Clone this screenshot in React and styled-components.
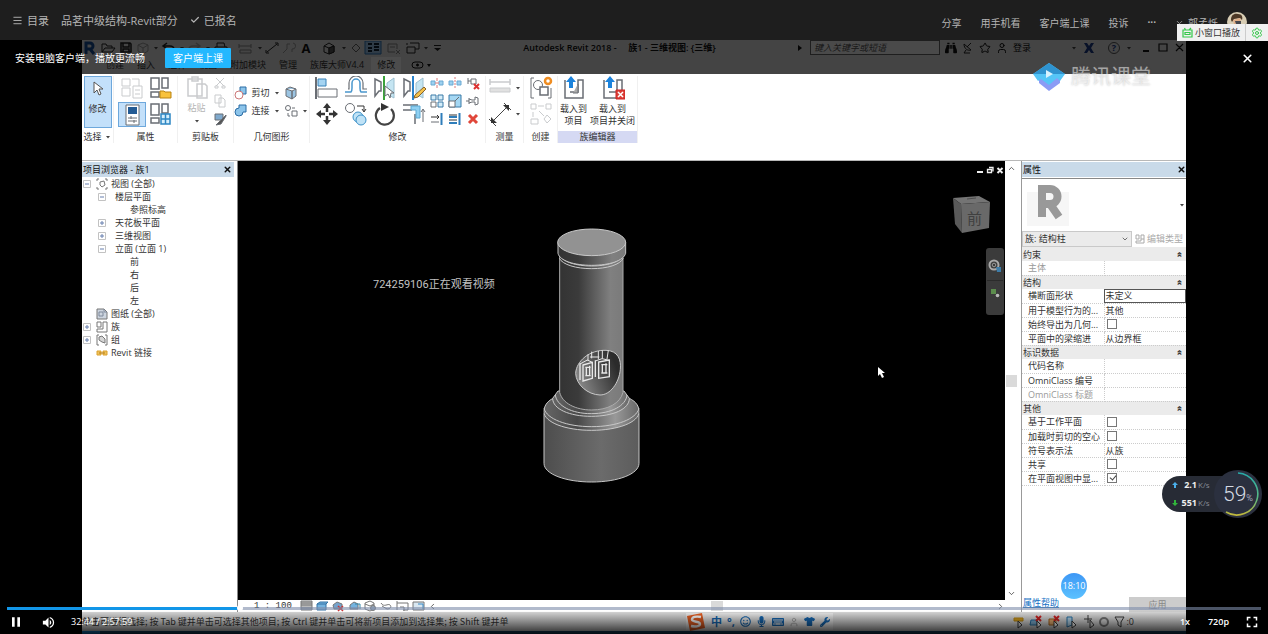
import React, { useState } from "react";
import styled, { createGlobalStyle, css } from "styled-components";
import {
    FaBinoculars, FaKeyboard, FaMicrophone, FaRegSmile, FaTshirt, FaWrench,
} from "react-icons/fa";
import { MdFullscreen, MdPause, MdVolumeUp } from "react-icons/md";
import {
    Check, ChevronDown, ChevronLeft, ChevronRight, ChevronUp, Menu, Settings, Star, User, X,
} from "lucide-react";

const treeItems = [
    { depth: 0, sign: "-", icon: "view", text: "视图 (全部)" },
    { depth: 1, sign: "-", text: "楼层平面" },
    { depth: 2, text: "参照标高" },
    { depth: 1, sign: "+", text: "天花板平面" },
    { depth: 1, sign: "+", text: "三维视图" },
    { depth: 1, sign: "-", text: "立面 (立面 1)" },
    { depth: 2, text: "前" },
    { depth: 2, text: "右" },
    { depth: 2, text: "后" },
    { depth: 2, text: "左" },
    { depth: 0, icon: "sheet", text: "图纸 (全部)" },
    { depth: 0, sign: "+", icon: "family", text: "族" },
    { depth: 0, sign: "+", icon: "group", text: "组" },
    { depth: 0, icon: "link", text: "Revit 链接" },
];

const propertyGroups = [
    { title: "约束", rows: [{ name: "主体", muted: true }] },
    {
        title: "结构",
        rows: [
            { name: "横断面形状", value: "未定义", active: true },
            { name: "用于模型行为的...", value: "其他" },
            { name: "始终导出为几何...", check: true },
            { name: "平面中的梁缩进", value: "从边界框" },
        ],
    },
    {
        title: "标识数据",
        rows: [{ name: "代码名称" }, { name: "OmniClass 编号" }, { name: "OmniClass 标题", muted: true }],
    },
    {
        title: "其他",
        rows: [
            { name: "基于工作平面", check: true },
            { name: "加载时剪切的空心", check: true },
            { name: "符号表示法", value: "从族" },
            { name: "共享", check: true },
            { name: "在平面视图中显...", check: true, checked: true },
        ],
    },
];

const tabs = ["创建", "插入", "注释", "视图", "附加模块", "管理", "族库大师V4.4"];

export default function App() {
    const [position, setPosition] = useState(18.39);

    return (
        <Page>
            <Global />
            <TopBar>
                <TopLeft>
                    <TopButton type="button"><Menu size={11} strokeWidth={2} />目录</TopButton>
                    <Course>品茗中级结构-Revit部分</Course>
                    <Enrolled><Check size={10} strokeWidth={3} />已报名</Enrolled>
                </TopLeft>
                <TopRight>
                    <TopLink href="#share">分享</TopLink>
                    <TopLink href="#phone">用手机看</TopLink>
                    <TopLink href="#client">客户端上课</TopLink>
                    <TopLink href="#report">投诉</TopLink>
                    <TopLink href="#more"><b>···</b></TopLink>
                    <Account type="button"><ChevronDown size={9} />郭孟烁<Avatar /></Account>
                </TopRight>
            </TopBar>

            <Stage>
                <Video>
                    <QuickBar />
                    <TabRow>
                        {tabs.map((t) => <Tab key={t} type="button">{t}</Tab>)}
                        <Tab type="button" $active>修改</Tab>
                        <Svg $w={28} $h={10} viewBox="0 0 28 10" fill="none" stroke="#111">
                            <rect x="4" y="2" width="11" height="6" rx="3" /><circle cx="9.500" cy="5" r="1" fill="#111" />
                            <path d="M19 4h4l-2 3z" fill="#111" stroke="none" />
                        </Svg>
                    </TabRow>
                    <Ribbon />
                    <Workspace>
                        <Browser>
                            <PanelHead>项目浏览器 - 族1<X size={9} strokeWidth={4} /></PanelHead>
                            <Tree>
                                {treeItems.map((item) => (
                                    <TreeRow key={item.text} $depth={item.depth}>
                                        <Sign $on={Boolean(item.sign)}>{item.sign === "+" ? <Plus /> : item.sign ? <Minus /> : null}</Sign>
                                        {item.depth === 0 && <TreeIcon kind={item.icon} />}
                                        <span>{item.text}</span>
                                    </TreeRow>
                                ))}
                            </Tree>
                        </Browser>
                        <Center>
                            <Drawing>
                                <Canvas>
                                    <Viewer>724259106正在观看视频</Viewer>
                                    <PillarBox><Pillar /></PillarBox>
                                    <CursorBox><Pointer /></CursorBox>
                                    <WindowButtons>
                                        <Svg $w={28} $h={10} viewBox="0 0 28 10" fill="none" stroke="#eee" strokeWidth="2">
                                            <path d="M1 7h6M21.500 3l5 5M26.500 3l-5 5" />
                                            <path d="M11.500 4.500h4v3h-4zM13 2.500h4v4" strokeWidth="1.300" />
                                        </Svg>
                                    </WindowButtons>
                                    <CubeBox><ViewCube /></CubeBox>
                                    <NavBar>
                                        <Svg $w={14} $h={15} viewBox="0 0 14 15" fill="none">
                                            <circle cx="6" cy="6" r="4.500" stroke="#aaa" strokeWidth="2" />
                                            <circle cx="6" cy="6" r="1.800" stroke="#999" />
                                            <path d="M8 8h5v5H9z" fill="#3d7ca8" />
                                        </Svg>
                                        <NavLine />
                                        <Svg $w={12} $h={12} viewBox="0 0 12 12">
                                            <path d="M2 2h5v5H2z" fill="#5c8d4d" /><circle cx="8.500" cy="8.500" r="1.800" fill="#bbb" />
                                        </Svg>
                                    </NavBar>
                                </Canvas>
                                <VScroll><ChevronUp size={9} /><Thumb /><ChevronDown size={9} /></VScroll>
                            </Drawing>
                            <ViewBar>
                                <Scale>1 : 100</Scale>
                                <ViewIcons />
                                <ChevronLeft size={9} />
                                <HTrack><HThumb /></HTrack>
                                <ChevronRight size={9} />
                            </ViewBar>
                        </Center>
                        <Properties />
                    </Workspace>
                    <StatusBar>
                        <Hint>单击可进行选择; 按 Tab 键并单击可选择其他项目; 按 Ctrl 键并单击可将新项目添加到选择集; 按 Shift 键并单</Hint>
                        <InputTools>
                            <Svg $w={20} $h={18} viewBox="0 0 20 18">
                                <path d="M1 3 16 0l3 15-15 3z" fill="#e65e22" />
                                <path d="M15 4C10 3 6 4 6 6.500c0 3 8 1.500 8 4.500 0 2.500-5 3-9 2" fill="none" stroke="#fff" strokeWidth="2.400" />
                            </Svg>
                            <b>中</b><b>°,</b>
                            <FaRegSmile size={11} /><FaMicrophone size={11} /><FaKeyboard size={12} />
                            <User size={10} color="#a5a5a5" /><FaTshirt size={11} /><FaWrench size={10} />
                        </InputTools>
                        <Filters />
                    </StatusBar>
                    <TaskStrip />
                </Video>

                <Banner>
                    安装电脑客户端，播放更流畅
                    <ClientButton type="button">客户端上课</ClientButton>
                    <CloseButton type="button" aria-label="关闭"><X size={13} strokeWidth={3} /></CloseButton>
                </Banner>
                <Brand>
                    <Svg $w={34} $h={30} viewBox="0 0 34 30">
                        <path d="M7 14v7l10 8 11-8v-7z" fill="#8b9cf5" />
                        <path d="M17 1 33 12l-5 7-3-3-8 7-8-6-3 2-5-7z" fill="#55c5f7" />
                        <path d="M17 1 33 12H1z" fill="#2f93cf" />
                        <path d="m14 8 7 4-7 4z" fill="#d8f3ff" />
                    </Svg>
                    腾讯课堂
                </Brand>
                <MiniPlayer>
                    <MiniButton type="button">
                        <Svg $w={11} $h={11} viewBox="0 0 11 11" fill="none" stroke="#35c84a" strokeWidth="1.200">
                            <path d="M1 3h9v7H1zM3.500 3 2.500 1M7 3l2-2M3 5.500h5v2H3z" />
                        </Svg>
                        小窗口播放
                    </MiniButton>
                    <MiniButton type="button" aria-label="设置"><Settings size={12} color="#35c84a" /></MiniButton>
                </MiniPlayer>
                <Clock>18:10</Clock>
                <Speed>
                    <Rates>
                        <Rate><RateArrow up /><b>2.1</b>K/s</Rate>
                        <Rate><RateArrow /><b>551</b>K/s</Rate>
                    </Rates>
                    <Gauge>
                        <GaugeRing viewBox="0 0 48 48" fill="none">
                            <defs>
                                <linearGradient id="ring" x1="0" y1="0" x2="0" y2="1">
                                    <stop offset="0" stopColor="#27aaa9" /><stop offset=".6" stopColor="#59bb83" /><stop offset="1" stopColor="#c2b83b" />
                                </linearGradient>
                            </defs>
                            <path d="M24 3A21 21 0 1 1 12 42" stroke="url(#ring)" strokeWidth="1.600" />
                        </GaugeRing>
                        59<small>%</small>
                    </Gauge>
                </Speed>

                <Controls>
                    <Seek
                        type="range" min="0" max="100" step="0.01" aria-label="播放进度"
                        value={position} onChange={(e) => setPosition(Number(e.target.value))}
                        style={{ "--played": `${position}%` }}
                    />
                    <ControlRow>
                        <ControlButton type="button" aria-label="暂停"><MdPause size={16} /></ControlButton>
                        <ControlButton type="button" aria-label="音量"><MdVolumeUp size={15} /></ControlButton>
                        <Time>32:44 / 2:57:59</Time>
                        <ControlButton type="button">1x</ControlButton>
                        <ControlButton type="button">720p</ControlButton>
                        <ControlButton type="button" aria-label="全屏"><MdFullscreen size={18} /></ControlButton>
                    </ControlRow>
                </Controls>
            </Stage>
        </Page>
    );
}

function Avatar() {
    return (
        <Svg $w={20} $h={20} viewBox="0 0 20 20">
            <circle cx="10" cy="10" r="10" fill="#d8cdb4" />
            <path d="M4 8c0-5 3-7 7-6 4 0 5 3 4 6l-2-2-6 1-2 3z" fill="#4d3826" />
            <path d="M6 8l7-2 1 4-3 3-4-1z" fill="#dfae88" />
            <path d="M3 18c1-5 4-6 7-5 3-1 6 1 7 5-4 3-10 3-14 0z" fill="#f1eee6" />
            <path d="M8 9h6v3H9z" fill="#45474d" />
        </Svg>
    );
}

function Dot() {
    return <Svg $w={8} $h={10} viewBox="0 0 8 10"><path d="M2 4h4L4 6.500z" fill="#444" /></Svg>;
}

function RateArrow({ up }) {
    return (
        <Svg $w={8} $h={8} viewBox="0 0 8 8">
            {up ? <path d="M4 1l3 3H5v3H3V4H1z" fill="#4aaeea" /> : <path d="M4 7L1 4h2V1h2v3h2z" fill="#31b53b" />}
        </Svg>
    );
}

function QuickBar() {
    return (
        <TitleRow>
            <QuickTools>
                <Svg $w={16} $h={14} viewBox="0 0 16 14"><path d="M4 13V2h4a3 3 0 0 1 0 6H5M8 8l4 5" fill="none" stroke="#174f96" strokeWidth="3" /></Svg>
                <Svg $w={20} $h={14} viewBox="0 0 20 14" fill="none" stroke="#222"><path d="M4 11V3h4l1 2h5v2M4 11l3-4h10l-3 4z" /></Svg>
                <Svg $w={16} $h={14} viewBox="0 0 16 14" fill="none" stroke="#222" strokeWidth="1.500"><path d="M3 2h9l1 1v8H3zM5 2v4h6V2M5 11V8h6v3" /></Svg>
                <Svg $w={18} $h={14} viewBox="0 0 18 14" fill="none" stroke="#999"><path d="m4 4 5-2 5 2v6l-5 3-5-3zM4 4l5 3 5-3M9 7v6" /></Svg>
                <Dot />
                <Svg $w={18} $h={14} viewBox="0 0 18 14" fill="none" stroke="#222" strokeWidth="1.500"><path d="M7 2 3 5l4 3M3 5h7c5 0 5 6 1 6" /></Svg>
                <Dot />
                <Svg $w={18} $h={14} viewBox="0 0 18 14" fill="none" stroke="#aaa" strokeWidth="1.500"><path d="m10 2 4 3-4 3M14 5H7c-5 0-5 6-1 6" /></Svg>
                <Dot />
                <Svg $w={18} $h={14} viewBox="0 0 18 14" fill="none" stroke="#222"><path d="M5 6V2h7l1 4M3 6h12v5H3zM6 9h6v4H6z" /></Svg>
                <Svg $w={26} $h={14} viewBox="0 0 26 14" fill="none" stroke="#888"><path d="M9 5h12M9 3v4M21 3v4M10 9h11v3H10z" /></Svg>
                <Dot />
                <Svg $w={16} $h={14} viewBox="0 0 16 14" stroke="#222"><path d="M3 11 13 3M2 9v3h3M11 2h3v3" fill="none" /></Svg>
                <Svg $w={18} $h={14} viewBox="0 0 18 14" fill="none" stroke="#999"><path d="M3 12 7 8V3h3M13 2a3 3 0 1 1-1 6v3" /></Svg>
                <BigA>A</BigA>
                <Svg $w={26} $h={14} viewBox="0 0 26 14" fill="none" stroke="#222"><path d="m10 5 5-3 5 3v6l-5 2-5-2zM10 5l5 2 5-2M15 7v6" /><path d="M15 7l5-2v6l-5 2z" fill="#555" /></Svg>
                <Dot />
                <Svg $w={16} $h={14} viewBox="0 0 16 14" fill="none" stroke="#666"><path d="m4 7 4-4 4 4-4 4z" /></Svg>
                <Svg $w={18} $h={14} viewBox="0 0 18 14"><path d="M1 0h16v13H1z" fill="#9fc6ea" stroke="#2a76ba" /><path d="M4 3h4M4 7h4M4 10h4M10 3h5M10 6h5M10 9h5" stroke="#123" strokeWidth="2" /></Svg>
                <Svg $w={22} $h={14} viewBox="0 0 22 14" fill="none" stroke="#888"><path d="M6 3h9v5M6 3v8h7M8 6h5M14 9l4 4M18 9l-4 4" /></Svg>
                <Svg $w={18} $h={14} viewBox="0 0 18 14" fill="none" stroke="#222"><path d="M6 2h9v6h-4M3 6h8v6H3zM3 4V2" /></Svg>
                <Dot />
                <Svg $w={14} $h={10} viewBox="0 0 14 10"><path d="M4 2h7v1H4zM4 5h7L7.500 8z" fill="#222" /></Svg>
            </QuickTools>
            <AppTitle>Autodesk Revit 2018 -&nbsp;&nbsp;&nbsp;&nbsp; 族1 - 三维视图: {"{三维}"}</AppTitle>
            <TitleTools>
                <Svg $w={10} $h={10} viewBox="0 0 10 10"><path d="M3 2v6l4-3z" fill="#111" /></Svg>
                <Search aria-label="搜索" placeholder="键入关键字或短语" />
                <FaBinoculars size={12} />
                <Svg $w={12} $h={12} viewBox="0 0 12 12" fill="none" stroke="#222"><path d="M2 2c0 5 4 7 7 6zM5 5l4-4M4 8l-2 3h6" /></Svg>
                <Star size={12} /><User size={12} /><Login>登录</Login>
                <Dot />
                <Svg $w={12} $h={12} viewBox="0 0 12 12"><path d="M1 1h3l2 3 2-3h3L8 6l3 5H8L6 8l-2 3H1l3-5z" fill="#1b3b86" /></Svg>
                <HelpMark>?</HelpMark>
                <Dot />
                <Svg $w={48} $h={12} viewBox="0 0 48 12" fill="none" stroke="#111" strokeWidth="1.200">
                    <path d="M5 9h6" strokeWidth="2" /><path d="M21 2h8v7h-8zM38 2l7 7M45 2l-7 7" />
                </Svg>
            </TitleTools>
        </TitleRow>
    );
}

/* 24px ribbon glyphs */
const Big = ({ children, faded, w = 24, h = 24 }) => (
    <Svg $w={w} $h={h} $faded={faded} viewBox={`0 0 ${w} ${h}`} fill="none" stroke="#6a6e74">{children}</Svg>
);
const Small = ({ children, faded }) => (
    <Svg $w={14} $h={14} $faded={faded} viewBox="0 0 14 14" fill="none" stroke="#6a6e74">{children}</Svg>
);

function Ribbon() {
    return (
        <RibbonBar>
            <Group $w={32}>
                <Modify type="button">
                    <Svg $w={12} $h={16} viewBox="0 0 12 16"><path d="M2 1v11l3-3 2 5 2-1-2-5h4z" fill="#fff" stroke="#555" /></Svg>
                    修改
                </Modify>
                <GroupName>选择 <Dot /></GroupName>
            </Group>
            <Group $w={64}>
                <PairGrid>
                    <Big faded><path d="M2 3h8v7H2zM12 3h7v7M2 12h8v8H2zM13 10h9v12h-9zM15 14h5M15 18h5" /></Big>
                    <Big><path d="M3 2h8v11H3zM14 2h6v10h-6zM3 16h8v5H3z" strokeWidth="1.500" /><path d="M12 15h4l1 1h6v6H12z" fill="#f9c23c" stroke="#b98313" /></Big>
                    <Picked>
                        <Big><path d="M6 2h13v20H6z" fill="#fff" /><path d="M8 4h9v7H8z" fill="#245b94" stroke="none" /><path d="M8 15h9M8 18h9M11 13v3M14 17v3" /></Big>
                    </Picked>
                    <Big><path d="M3 2h8v11H3zM14 2h6v9h-6zM3 16h8v5H3z" strokeWidth="1.500" /><path d="M13 12h9v10h-9zM13 17h9M17.500 12v10" fill="#d6effc" stroke="#2d86c3" strokeWidth="1.500" /></Big>
                </PairGrid>
                <GroupName>属性</GroupName>
            </Group>
            <Group $w={56}>
                <Row $gap={4}>
                    <Stack $muted>
                        <Big faded><path d="M3 3h14v17H3zM7 1h6v4H7zM12 8h8l2 2v12H12z" fill="#fff" strokeWidth="1.500" /></Big>
                        粘贴<Dot />
                    </Stack>
                    <Stack $gap={4}>
                        <Small faded><path d="m3 2 8 8M11 2l-8 8M2 10h3v2H2zM9 10h3v2H9z" /></Small>
                        <Small faded><path d="M2 1h6v8H2zM6 4h4l2 2v7H6z" /></Small>
                        <Small><path d="M2 2h8v6H2z" fill="#7fa9cd" /><path d="m13 3-7 7-3 3 5-1 5-8z" fill="#555" /></Small>
                    </Stack>
                </Row>
                <GroupName>剪贴板</GroupName>
            </Group>
            <Group $w={76}>
                <Stack $gap={4} $left>
                    <Row $gap={3}>
                        <Small><path d="M6 1h6v7H6z" fill="#8cc4ea" stroke="#2a6ca5" /><circle cx="5" cy="9" r="4" fill="#fff" stroke="#c77" /></Small>
                        剪切<Dot />
                        <Small><path d="m2 3 6 2v8L2 10zM8 5l4-2v7l-4 3zM2 3l4-2 6 2" fill="#9cc5e3" /></Small>
                    </Row>
                    <Row $gap={3}>
                        <Small><path d="M5 1h7v7H9a4 4 0 1 1-4-4z" fill="#8cc4ea" stroke="#2a6ca5" /></Small>
                        连接<Dot />
                        <Small><circle cx="4" cy="4" r="2.500" /><path d="M8 7h5v5H8zM8 4h3M4 9v3h2" /></Small>
                        <Dot />
                    </Row>
                </Stack>
                <GroupName>几何图形</GroupName>
            </Group>
            <Group $w={176}>
                <Row $gap={4}>
                    <LargeGrid>
                        <Big><path d="M1 1v22" strokeWidth="2" /><path d="M3 3h8v7H3z" fill="#a5d4f2" stroke="#3882b8" /><path d="M3 13h19v8H3z" /></Big>
                        <Big><path d="M1 16h6c1-1 1-3 1-4V7a4 4 0 0 1 8 0v5c0 1 0 3 1 4h6" stroke="#4a97cd" strokeWidth="1.500" /><path d="M1 20h22M4 13h1V7a7 7 0 0 1 14 0v6h4" strokeWidth="1.200" /></Big>
                        <Big><path d="M2 3 8 6v9H6l-4 5z" strokeWidth="1.500" /><path d="m21 2-7 5v11l7 4z" fill="#c5e5f2" stroke="#9bbfd0" /><path d="M11 0v24" stroke="#3ba23b" strokeWidth="2" /><path d="M12 10v10l3-2 2 4 1-5h3z" fill="#fff" /></Big>
                        <Big><path d="M2 3 8 6v9H6l-4 5z" strokeWidth="1.500" /><path d="m21 2-7 5v11l7 4z" fill="#c5e5f2" stroke="#9bbfd0" /><path d="M11 0v24" stroke="#2a83cc" strokeWidth="2" /><path d="m22 11-9 8-1 3 4-1 8-8z" fill="#f3c14a" stroke="#87602a" /></Big>
                        <Big><path d="M12 4v6M12 14v6M4 12h6M14 12h6" strokeWidth="2.500" stroke="#333" /><path d="m12 1 4 5H8zM12 23l4-5H8zM1 12l5-4v8zM23 12l-5-4v8z" fill="#333" stroke="none" /></Big>
                        <Big><circle cx="6" cy="6" r="4.500" /><path d="M13 4h7v5M18 7l2 3 2-3" stroke="#333" /><circle cx="14" cy="15" r="5" fill="#bfe2f6" stroke="#3c91c8" /><circle cx="17" cy="18" r="5" fill="#bfe2f6" stroke="#3c91c8" /></Big>
                        <Big><path d="M7 6a9 9 0 1 0 11 1" strokeWidth="2.200" stroke="#444" /><path d="m8 1 8 4-8 4z" fill="#333" stroke="none" /></Big>
                        <Big><path d="M1 3h15M1 8h9M13 22V12" strokeWidth="1.500" /><path d="M9 4h9v12h-4V8H9z" fill="#8fd0f2" stroke="#5aa8d2" /><path d="M21 20V8M19 10l2-3 2 3" /></Big>
                    </LargeGrid>
                    <SmallGrid>
                        <Small><path d="M1 5h4v4H1zM9 5h4v4H9z" fill="#9dd1f0" stroke="#6aa9d3" /><path d="M7 2v3M7 9v3M5 7h4" stroke="#dc7b7b" /></Small>
                        <Small><path d="M1 5h4v4H1zM9 5h4v4H9z" fill="#9dd1f0" stroke="#6aa9d3" /><path d="M7 1v12" stroke="#dc7b7b" strokeDasharray="2 1" /></Small>
                        <Small><path d="M2 2v6M2 5h3M5 3h5v5H5z" /><path d="m8 8 5 5M13 8l-5 5" stroke="#d33" strokeWidth="2" /></Small>
                        <Small><path d="M1 1h5v5H1zM8 1h5v5H8zM8 8h5v5H8z" fill="#d5edf9" stroke="#3b7ba7" /><path d="M1 8h5v5H1z" /></Small>
                        <Small><path d="M1 1h12v12H1z" fill="#a4d7f3" stroke="#3b7ba7" /><path d="M1 7h6v6H1z" fill="#fff" /><path d="m7 7 4-4" /></Small>
                        <Small><path d="M3 7H0M3 4v6M3 5l3 1h3V3l3 1v6l-3 1V8H6L3 9" /></Small>
                        <Small><path d="M1 5h8M7 3l2 2-2 2" stroke="#333" /><path d="M1 10h8" /><path d="M11.500 1v12" stroke="#2e7dba" strokeWidth="2" /></Small>
                        <Small><path d="M1 3h8M1 8h8" stroke="#333" /><path d="M1 5h8M1 11h8M11.500 1v12" stroke="#2e7dba" strokeWidth="2" /></Small>
                        <Small><path d="m3 3 8 8M11 3l-8 8" stroke="#e0473a" strokeWidth="3" /></Small>
                    </SmallGrid>
                </Row>
                <GroupName>修改</GroupName>
            </Group>
            <Group $w={38}>
                <Stack>
                    <Row $gap={2}><Big faded><path d="M2 6h20M2 3v6M22 3v6" strokeWidth="1.500" /><path d="M2 12h20v4H2z" fill="#aaa" /></Big><Dot /></Row>
                    <Row $gap={2}><Big><path d="M4 20 20 4M1 17l7 7M16 1l7 7" stroke="#444" /><path d="M3 21v-6l6 6zM21 3h-6l6 6z" fill="#333" stroke="none" /></Big><Dot /></Row>
                </Stack>
                <GroupName>测量</GroupName>
            </Group>
            <Group $w={34}>
                <Stack>
                    <Big><path d="M5 2H2v20h3M19 22h3V12" /><circle cx="9" cy="9" r="4.500" /><path d="M11 11h8v8h-8z" fill="#fff" strokeWidth="1.500" /><circle cx="19" cy="5" r="3" fill="#fff" stroke="#ef8d22" strokeWidth="2.500" /></Big>
                    <Big faded><path d="M2 2h5v5H2zM17 2h5v5h-5zM2 17h7v5H2zM9 4h6M4 10v5M10 9l5 5M18 13l4 4-4 4-3-4z" /></Big>
                </Stack>
                <GroupName>创建</GroupName>
            </Group>
            <Group $w={80}>
                <Row $gap={0}>
                    <LoadItem>
                        <Big><path d="M3 4v18h18V4h-5v12H8" strokeWidth="1.500" /><path d="M11 17h5V8" fill="#aaa" /><path d="m9 0 5 6h-3v6H7V6H4z" fill="#1c83dc" stroke="none" /></Big>
                        载入到<br />项目
                    </LoadItem>
                    <LoadItem>
                        <Big><path d="M3 4v18h18V4h-5v12H8" strokeWidth="1.500" /><path d="m9 0 5 6h-3v6H7V6H4z" fill="#1c83dc" stroke="none" /><path d="M15 14h9v9h-9z" fill="#dd4038" stroke="#c22" /><path d="m17 16 5 5M22 16l-5 5" stroke="#fff" strokeWidth="1.500" /></Big>
                        载入到<br />项目并关闭
                    </LoadItem>
                </Row>
                <GroupName $tinted>族编辑器</GroupName>
            </Group>
        </RibbonBar>
    );
}

const Plus = () => <Svg $w={8} $h={8} viewBox="0 0 8 8" fill="none" stroke="#c2c2c2"><path d="M.5.5h7v7h-7z" /><path d="M2 4h4M4 2v4" stroke="#667fae" /></Svg>;
const Minus = () => <Svg $w={8} $h={8} viewBox="0 0 8 8" fill="none" stroke="#c2c2c2"><path d="M.5.5h7v7h-7z" /><path d="M2 4h4" stroke="#667fae" /></Svg>;

function TreeIcon({ kind }) {
    return (
        <Svg $w={12} $h={12} viewBox="0 0 12 12" fill="none" stroke="#777">
            {kind === "view" && <><path d="M1 3V1h2M9 1h2v2M11 9v2H9M3 11H1V9" /><path d="m4 4 4-1 1 4-3 2-2-2z" /></>}
            {kind === "sheet" && <><path d="M1 1h7l3 3v7H1z" fill="#cdd5df" /><path d="M3 4h4v4H3zM8 1v3h3" stroke="#7e899b" /></>}
            {kind === "family" && <path d="M1 1h4v5H1zM7 1h4v10H1V8h6z" />}
            {kind === "group" && <><path d="M3 1H1v10h2M9 1h2v10H9" /><path d="m3 3 3-1 3 3v4L6 8 3 6z" fill="#d5d5d5" /></>}
            {kind === "link" && <><path d="M1 4h4v4H1zM7 4h4v4H7z" fill="#eec25c" stroke="#dba02c" /><path d="M3 6h6" stroke="#b57d14" /></>}
        </Svg>
    );
}

function ViewIcons() {
    return (
        <Svg $w={128} $h={12} viewBox="0 0 128 12" fill="none" stroke="#777">
            <path d="M1 1h11v9H1zM1 3h11M1 5h11M1 8h11" fill="#bbb" />
            <path d="m17 4 3-2h8l-2 2v6h-9zM17 4h9" fill="#75b3df" stroke="#3273a5" />
            <path d="m33 5 4-3 5 2v5h-8z" fill="#75a3cc" /><path d="m38 6 5 5M43 6l-5 5" stroke="#c33" strokeWidth="1.500" />
            <path d="m50 5 4-3 4 2v5h-8z" fill="#75b3df" /><path d="M55 4h5v5" stroke="#38a" />
            <path d="m65 3 5-2 4 2v6l-4 2-5-2zM65 4l5 2 4-2" /><circle cx="73" cy="8" r="2.500" fill="#9ab" />
            <path d="M81 3c3 5 7 0 9 2s0 4-3 4l-5-3" /><path d="M97 1v9M97 3h11v7h-5M100 7h4v4" />
            <path d="M113 2h11v8h-11z" fill="#d9e7f1" /><path d="M118 4h5v5" stroke="#3a8ac5" />
        </Svg>
    );
}

function Filters() {
    return (
        <FilterSet>
            <Svg $w={112} $h={14} viewBox="0 0 112 14" fill="none" stroke="#3b3b3b">
                <path d="M1 3h9v3H1z" fill="#d9a21f" stroke="#b98813" /><path d="M5 6v7l4-3z" fill="#ddd" />
                <path d="M18 5h6v5h-7z" fill="#7eb2d5" stroke="#2773a8" /><path d="M23 1l5 5M28 1l-5 5" stroke="#c22" strokeWidth="2" /><path d="M24 6v7l4-3z" fill="#fff" />
                <path d="M36 4h7v6h-7z" fill="#e9af70" stroke="#a66421" /><path d="m41 1 5 5M46 1l-5 5" stroke="#c22" strokeWidth="2" /><path d="M41 6v7l4-3z" fill="#fff" />
                <path d="M54 2h5v8l-5 2z" fill="#b7d8ed" stroke="#2773a8" /><path d="M59 6v7l4-3z" fill="#fff" />
                <path d="M71 4h8M75 0v8M77 5v8l4-3z" /><circle cx="91" cy="7" r="4" stroke="#777" strokeWidth="2" />
                <path d="M102 2h9l-3 5v5l-3-2V7z" />
            </Svg>
            :0
        </FilterSet>
    );
}

function Pillar() {
    return (
        <Svg $w={140} $h={280} viewBox="0 0 420 840" fill="none" stroke="#c8c8c8" strokeWidth="3">
            <defs>
                <linearGradient id="base"><stop offset="0" stopColor="#4d4d4d" /><stop offset=".6" stopColor="#6b6b6b" /><stop offset="1" stopColor="#5c5c5c" /></linearGradient>
                <linearGradient id="shaft"><stop offset="0" stopColor="#333" /><stop offset=".3" stopColor="#3b3b3b" /><stop offset=".8" stopColor="#808080" /><stop offset="1" stopColor="#7a7a7a" /></linearGradient>
                <linearGradient id="torus"><stop offset="0" stopColor="#666" /><stop offset=".35" stopColor="#484848" /><stop offset=".75" stopColor="#999" /><stop offset="1" stopColor="#666" /></linearGradient>
                <linearGradient id="hole" x1="0" y1="1" x2="1" y2=".6"><stop offset="0" stopColor="#999" /><stop offset=".5" stopColor="#606060" /><stop offset="1" stopColor="#2b2b2b" /></linearGradient>
            </defs>
            <path d="M72 595v150c0 32 64 56 143 56s142-24 142-56V595z" fill="url(#base)" />
            <path d="M72 590c0 32 64 56 143 56s142-24 142-56c0-20-12-34-40-45H110c-26 10-38 25-38 45z" fill="url(#torus)" />
            <path d="M72 580c8 32 68 55 143 55s134-23 142-55" />
            <path d="M98 550c0 32 50 54 116 54s114-22 114-54l-16-22H114z" fill="url(#torus)" />
            <path d="M106 540c4 32 48 56 108 56s104-24 107-56" />
            <path d="M119 120v412c8 33 48 53 96 53s86-20 94-53V120z" fill="url(#shaft)" stroke="#aaa" />
            <path d="M118 130c10 19 50 31 97 31s85-12 95-31M118 120c10 21 50 33 97 33s85-12 95-33" />
            <path d="M114 82v33c5 22 48 36 101 36s96-14 102-36V82z" fill="url(#shaft)" />
            <ellipse cx="215" cy="82" rx="102" ry="40" fill="#929292" />
            <path d="M167 475c2-38 43-71 91-69 36 1 46 28 43 57-4 41-30 77-61 77-37-1-72-31-73-65z" fill="url(#hole)" />
            <g strokeWidth="4" stroke="#e8e8e8">
                <path d="M180 445v50M189 450l28-8v48l-28 8zM196 457h16M196 482h16M199 457v25M209 452v32" />
                <path d="M226 436v50M236 441l32-6v50l-32 5zM244 449h18M244 474h18M247 450v23M258 445v30" />
                <path d="M204 418v20M210 426h28M215 410v20M235 408v25M247 406v25M265 406l-4 26M180 447l22-12 15 7M226 438l20-7 22 5" strokeWidth="3" />
            </g>
        </Svg>
    );
}

function ViewCube() {
    return (
        <Svg $w={40} $h={42} viewBox="0 0 40 42">
            <path d="m1 5 26-2 11 6-29 2z" fill="#747474" /><path d="m1 5 8 6 1 29-7-9z" fill="#595959" />
            <path d="m9 11 29-2-1 26-27 5z" fill="#696969" />
            <text x="15" y="31" fontSize="15" fill="#404040" fontFamily="Noto Sans CJK SC, sans-serif">前</text>
            <path d="M15 6l9-1" stroke="#4d4d4d" />
        </Svg>
    );
}

const Pointer = () => <Svg $w={8} $h={12} viewBox="0 0 8 12"><path d="M1 0v9l2-2 2 4 2-1-2-4h3z" fill="#fff" /></Svg>;

function Properties() {
    return (
        <PropPanel>
            <PanelHead $flush>属性<X size={9} strokeWidth={4} /></PanelHead>
            <TypeBox>
                <Svg $w={52} $h={50} viewBox="0 0 52 50">
                    <path d="M5 12h42v34H5z" fill="#f6f6f6" />
                    <path d="M20 37V9h8a7 7 0 0 1 0 15h-7M28 24l9 13" fill="none" stroke="#999" strokeWidth="8" />
                </Svg>
                <Dot />
            </TypeBox>
            <TypeRow>
                <TypeSelect aria-label="族类型" defaultValue="a"><option value="a">族: 结构柱</option></TypeSelect>
                <SelectArrow><ChevronDown size={8} /></SelectArrow>
                <EditType type="button" disabled>
                    <Svg $w={10} $h={10} viewBox="0 0 10 10" fill="none" stroke="#aaa"><path d="M1 1h3v4H1zM6 1h3v8H1V7h5zM6 5h3" /></Svg>
                    编辑类型
                </EditType>
            </TypeRow>
            <PropTable>
                {propertyGroups.map((group) => (
                    <tbody key={group.title}>
                        <tr><GroupHead colSpan={2}><div>{group.title}<span>«</span></div></GroupHead></tr>
                        {group.rows.map((row) => (
                            <tr key={row.name}>
                                <PropName $muted={row.muted}>
                                    {row.check ? <label htmlFor={row.name}>{row.name}</label> : row.name}
                                </PropName>
                                <PropValue $active={row.active}>
                                    {row.check ? <Tick type="checkbox" id={row.name} defaultChecked={row.checked} /> : row.value}
                                </PropValue>
                            </tr>
                        ))}
                    </tbody>
                ))}
            </PropTable>
            <PropFoot>
                <a href="#help">属性帮助</a>
                <Apply type="button" disabled>应用</Apply>
            </PropFoot>
        </PropPanel>
    );
}

const Global = createGlobalStyle`
    * { box-sizing: border-box; }
    body {
        margin: 0;
        background: #000;
        font-family: "Open Sans", "Noto Sans CJK SC", sans-serif;
    }
    button, input, select { font: inherit; color: inherit; }
    button { padding: 0; border: 0; background: none; cursor: pointer; }
    a { color: inherit; text-decoration: none; }
`;

const Svg = styled.svg`
    display: block;
    flex: none;
    width: ${(p) => p.$w}px;
    height: ${(p) => p.$h}px;
    opacity: ${(p) => (p.$faded ? 0.35 : 1)};
`;

const Page = styled.div`
    display: flex;
    flex-direction: column;
    min-height: 100vh;
    background: #000;
`;

const TopBar = styled.header`
    display: flex;
    justify-content: space-between;
    height: 40px;
    padding: 0 21px 0 12px;
    background: #1e1e1e;
    color: #b5b5b5;
    white-space: nowrap;
`;

const TopLeft = styled.div`
    display: flex;
    align-items: center;
    gap: 12px;
    font-size: 11px;
`;

const TopButton = styled.button`
    display: flex;
    align-items: center;
    gap: 4px;
`;

const Course = styled.span``;

const Enrolled = styled.span`
    display: flex;
    align-items: center;
    gap: 4px;
`;

const TopRight = styled.nav`
    display: flex;
    align-items: center;
    gap: 19px;
    padding-top: 4px;
    font-size: 10px;
`;

const TopLink = styled.a``;

const Account = styled.button`
    display: flex;
    align-items: center;
    gap: 4px;

    svg:last-child { margin-left: 5px; }
`;

const Stage = styled.main`
    position: relative;
    display: flex;
    flex: 1;
    padding: 0 82px;
    font-size: 9px;
    line-height: 12px;
`;

const Video = styled.section`
    display: flex;
    flex: 1;
    flex-direction: column;
    min-width: 0;
    background: #fff;
    color: #333;
`;

const TitleRow = styled.div`
    display: flex;
    align-items: center;
    height: 15px;
    background: #e3e3e3;
    color: #111;
    overflow: hidden;
`;

const QuickTools = styled.div`
    display: flex;
    align-items: center;
    flex: none;
`;

const BigA = styled.b`
    width: 16px;
    font-size: 13px;
    text-align: center;
`;

const AppTitle = styled.div`
    flex: 1;
    text-align: center;
    font-weight: 600;
    white-space: nowrap;
`;

const TitleTools = styled.div`
    display: flex;
    align-items: center;
    flex: none;
    gap: 5px;
`;

const Search = styled.input`
    width: 130px;
    height: 15px;
    padding: 0 3px;
    border: 1px solid #666;
    background: #f8f8f8;
    font-style: italic;

    &::placeholder { color: #555; }
`;

const Login = styled.span`
    width: 52px;
`;

const HelpMark = styled.b`
    width: 12px;
    height: 12px;
    margin-left: 8px;
    border: 1px solid #555;
    border-radius: 50%;
    color: #1b3b86;
    line-height: 10px;
    text-align: center;
`;

const TabRow = styled.div`
    display: flex;
    align-items: center;
    gap: 13px;
    height: 19px;
    padding-left: 24px;
    background: #e3e3e3;
`;

const Tab = styled.button`
    height: 16px;

    ${(p) => p.$active && css`
        margin: 0 -6px;
        padding: 0 6px;
        background: #fff;
    `}
`;

const RibbonBar = styled.div`
    display: flex;
    height: 87px;
    padding-top: 2px;
    border-bottom: 1px solid #b8b8b8;
`;

const Group = styled.div`
    display: flex;
    flex: none;
    flex-direction: column;
    align-items: center;
    justify-content: space-between;
    width: ${(p) => p.$w}px;
    height: 67px;
    border-right: 1px solid #f0f0f0;
    white-space: nowrap;
`;

const GroupName = styled.div`
    display: flex;
    align-items: center;
    justify-content: center;
    gap: 2px;
    width: 100%;
    height: 12px;
    background: ${(p) => (p.$tinted ? "#d5d9f3" : "transparent")};
`;

const Modify = styled.button`
    display: flex;
    flex-direction: column;
    align-items: center;
    gap: 6px;
    width: 28px;
    height: 52px;
    padding-top: 4px;
    border: 1px solid #6ea8dc;
    background: #c3e0fa;
`;

const PairGrid = styled.div`
    display: grid;
    grid-template-columns: 28px 28px;
    grid-auto-rows: 26px;
    justify-items: center;
`;

const Picked = styled.div`
    display: flex;
    justify-content: center;
    width: 28px;
    height: 25px;
    border: 1px solid #6ea8dc;
    background: #c3e0fa;
`;

const Row = styled.div`
    display: flex;
    align-items: center;
    gap: ${(p) => p.$gap}px;
`;

const Stack = styled.div`
    display: flex;
    flex-direction: column;
    align-items: ${(p) => (p.$left ? "flex-start" : "center")};
    gap: ${(p) => p.$gap || 2}px;
    margin: ${(p) => (p.$left ? "10px 0 0" : "0")};
    color: ${(p) => (p.$muted ? "#b5b5b5" : "inherit")};
`;

const LargeGrid = styled.div`
    display: grid;
    grid-template-columns: repeat(4, 24px);
    gap: 2px 5px;
`;

const SmallGrid = styled.div`
    display: grid;
    grid-template-columns: repeat(3, 14px);
    gap: 4px;
`;

const LoadItem = styled.button`
    display: block;
    flex: none;
    width: 30px;
    text-align: center;

    &:last-child { width: 48px; }
    svg { margin: 0 auto 3px; }
`;

const Workspace = styled.div`
    display: flex;
    flex: 1;
    min-height: 0;
`;

const Browser = styled.aside`
    flex: none;
    width: 156px;
    padding: 1px 3px 0 0;
    border-right: 1px solid #888;
`;

const PanelHead = styled.div`
    display: flex;
    align-items: center;
    justify-content: space-between;
    height: 15px;
    padding: 0 1px;
    background: #c9dae9;
    color: #111;

    svg { margin-right: ${(p) => (p.$flush ? -1 : 1)}px; }
`;

const Tree = styled.div``;

const TreeRow = styled.div`
    display: flex;
    align-items: center;
    gap: 3px;
    height: 13px;
    padding-left: ${(p) => 1 + p.$depth * 15}px;
    white-space: nowrap;

    span { padding-left: ${(p) => (p.$depth ? 4 : 0)}px; }
`;

const Sign = styled.i`
    width: 10px;
    height: 8px;
    visibility: ${(p) => (p.$on ? "visible" : "hidden")};
`;

const Center = styled.div`
    display: flex;
    flex: 1;
    flex-direction: column;
    min-width: 0;
`;

const Drawing = styled.div`
    display: flex;
    flex: 1;
`;

const Canvas = styled.div`
    position: relative;
    flex: 1;
    overflow: hidden;
    background: #000;
`;

const Viewer = styled.div`
    position: absolute;
    top: 116px;
    left: 135px;
    color: #c2c2c2;
    font-family: Roboto, "Noto Sans CJK SC", sans-serif;
    font-size: 11px;
    line-height: 16px;
`;

const PillarBox = styled.div`
    position: absolute;
    top: 54px;
    left: 282px;
`;

const CursorBox = styled.div`
    position: absolute;
    top: 206px;
    left: 639px;
`;

const WindowButtons = styled.div`
    position: absolute;
    top: 4px;
    right: 1px;
`;

const CubeBox = styled.div`
    position: absolute;
    top: 32px;
    right: 13px;
`;

const NavBar = styled.div`
    position: absolute;
    top: 87px;
    right: 1px;
    display: flex;
    flex-direction: column;
    align-items: center;
    gap: 6px;
    width: 18px;
    height: 67px;
    padding-top: 11px;
    border-radius: 3px;
    background: #3b3b3b;
`;

const NavLine = styled.div`
    width: 16px;
    height: 1px;
    background: #2b2b2b;
`;

const VScroll = styled.div`
    display: flex;
    flex-direction: column;
    align-items: center;
    justify-content: space-between;
    width: 16px;
    padding: 3px 4px 2px 1px;
`;

const Thumb = styled.div`
    width: 11px;
    height: 12px;
    background: #dadada;
`;

const ViewBar = styled.div`
    display: flex;
    align-items: center;
    height: 12px;
    padding: 0 16px;
`;

const Scale = styled.span`
    width: 46px;
    font-family: "Liberation Mono", monospace;
`;

const HTrack = styled.div`
    display: flex;
    flex: 1;
    justify-content: center;
`;

const HThumb = styled.div`
    width: 12px;
    height: 10px;
    background: #dadada;
`;

const PropPanel = styled.aside`
    display: flex;
    flex: none;
    flex-direction: column;
    width: 165px;
    padding-top: 1px;
    border-left: 1px solid #999;
`;

const TypeBox = styled.div`
    display: flex;
    align-items: center;
    justify-content: space-between;
    height: 52px;
    margin-top: 1px;
    border-top: 1px solid #888;
`;

const TypeRow = styled.div`
    display: flex;
    align-items: center;
    height: 17px;
`;

const TypeSelect = styled.select`
    width: 110px;
    height: 16px;
    padding: 0 2px;
    border: 1px solid #c9c9c9;
    border-radius: 0;
    background: #ebebeb;
    appearance: none;
`;

const SelectArrow = styled.span`
    width: 0;
    height: 8px;
    pointer-events: none;

    svg { display: block; margin-left: -11px; }
`;

const EditType = styled.button`
    display: flex;
    align-items: center;
    gap: 2px;
    padding-left: 3px;
    color: #aaa;
`;

const PropTable = styled.table`
    width: 100%;
    border-collapse: collapse;
    table-layout: fixed;

    td, th { height: 14px; padding: 0 0 0 6px; line-height: 13px; }
`;

const GroupHead = styled.th`
    background: #ebebeb;
    font-weight: 400;
    text-align: left;

    div { display: flex; justify-content: space-between; margin-left: -5px; padding-right: 2px; }
    span { transform: rotate(90deg); font-weight: 700; }
`;

const PropName = styled.td`
    border-right: 1px dotted #ccc;
    border-bottom: 1px dotted #ccc;
    color: ${(p) => (p.$muted ? "#999" : "inherit")};
    white-space: nowrap;
`;

const PropValue = styled.td`
    && { padding-left: 1px; }
    border-bottom: 1px dotted #ccc;
    ${(p) => p.$active && css`
        outline: 1px solid #555;
        outline-offset: -1px;
    `}
`;

const Tick = styled.input`
    display: block;
    width: 10px;
    height: 10px;
    margin: 0 1px;
    border: 1px solid #777;
    background: #fff;
    appearance: none;

    &:checked::after {
        content: "";
        display: block;
        width: 3px;
        height: 5px;
        margin: 0 3px;
        border: solid #444;
        border-width: 0 1px 1px 0;
        transform: rotate(40deg);
    }
`;

const PropFoot = styled.div`
    display: flex;
    align-items: flex-end;
    justify-content: space-between;
    margin-top: auto;
    padding-left: 1px;

    a { color: #1471c4; text-decoration: underline; line-height: 18px; }
`;

const Apply = styled.button`
    width: 57px;
    height: 15px;
    background: #ccc;
    color: #888;
`;

const StatusBar = styled.div`
    display: flex;
    align-items: center;
    height: 19px;
    background: #d9d9d9;
`;

const Hint = styled.div`
    flex: none;
    width: 604px;
    overflow: hidden;
    font-family: "Noto Sans CJK SC", sans-serif;
    white-space: nowrap;
`;

const InputTools = styled.div`
    display: flex;
    align-items: center;
    gap: 5px;
    height: 17px;
    padding-right: 3px;
    background: #e9e9e9;
    color: #1668b3;

    b { font-size: 11px; }
`;

const FilterSet = styled.div`
    display: flex;
    align-items: center;
    gap: 1px;
    margin-left: auto;
    padding-right: 52px;
`;

const TaskStrip = styled.div`
    height: 3px;
    background: linear-gradient(90deg, #1b8fe0 18px, #1c4a6b 18px);
`;

const Banner = styled.div`
    position: absolute;
    top: 0;
    left: 0;
    right: 0;
    display: flex;
    align-items: center;
    height: 34px;
    padding: 2px 14px 0 15px;
    background: rgba(0, 0, 0, 0.7);
    color: #fff;
    font-size: 10px;
`;

const ClientButton = styled.button`
    width: 66px;
    height: 20px;
    margin-left: 20px;
    border-radius: 1px;
    background: #23b8ff;
`;

const CloseButton = styled.button`
    display: flex;
    margin-left: auto;
`;

const Brand = styled.div`
    position: absolute;
    top: 22px;
    right: 117px;
    display: flex;
    align-items: center;
    gap: 5px;
    color: rgba(255, 255, 255, 0.5);
    font-size: 20px;
    line-height: 30px;
    text-shadow: 0 0 2px rgba(100, 100, 100, 0.4);
`;

const MiniPlayer = styled.div`
    position: absolute;
    top: -16px;
    right: 0;
    display: flex;
    height: 17px;
    background: #f0f0f0;
    color: #333;
`;

const MiniButton = styled.button`
    display: flex;
    align-items: center;
    gap: 2px;
    padding: 0 5px;

    & + & { border-left: 1px solid #ccc; }
`;

const Clock = styled.div`
    position: absolute;
    right: 181px;
    bottom: 35px;
    width: 26px;
    height: 26px;
    border-radius: 50%;
    background: linear-gradient(#3d97f5, #5cc2ff);
    color: #fff;
    line-height: 26px;
    text-align: center;
`;

const Speed = styled.div`
    position: absolute;
    right: 6px;
    bottom: 116px;
    display: flex;
    align-items: center;
`;

const Rates = styled.div`
    width: 66px;
    height: 36px;
    margin-right: -14px;
    padding-left: 9px;
    border-radius: 18px 0 0 18px;
    background: #272b35;
`;

const Rate = styled.div`
    display: flex;
    align-items: center;
    height: 18px;
    color: #858a94;
    font-size: 8px;

    b { width: 18px; margin-right: 1px; color: #eee; font-size: 9px; text-align: right; }
`;

const Gauge = styled.div`
    position: relative;
    display: flex;
    align-items: baseline;
    justify-content: center;
    width: 48px;
    height: 48px;
    border-radius: 50%;
    background: #2b303f;
    color: #d5dae3;
    font-family: Roboto, sans-serif;
    font-size: 21px;
    font-weight: 300;
    line-height: 48px;

    small { font-size: 9px; }
`;

const GaugeRing = styled.svg`
    position: absolute;
    inset: 0;
`;

const Controls = styled.div`
    position: absolute;
    left: 0;
    right: 0;
    bottom: 0;
    padding: 0 7px;
    background: linear-gradient(transparent 6px, rgba(0, 0, 0, 0.8));
    color: #fff;
`;

const Seek = styled.input`
    display: block;
    width: 100%;
    height: 6px;
    margin: 0;
    background: linear-gradient(90deg, #1296e8 var(--played), rgba(125, 140, 170, 0.6) var(--played)) center / 100% 3px no-repeat;
    appearance: none;
    cursor: pointer;

    &::-webkit-slider-thumb {
        width: 6px;
        height: 6px;
        border-radius: 50%;
        background: #fff;
        appearance: none;
    }
`;

const ControlRow = styled.div`
    display: flex;
    align-items: center;
    gap: 14px;
    height: 23px;
    padding-bottom: 1px;
`;

const ControlButton = styled.button`
    display: flex;
    min-width: 18px;
    justify-content: center;
    font-weight: 600;
`;

const Time = styled.span`
    flex: 1;
`;
